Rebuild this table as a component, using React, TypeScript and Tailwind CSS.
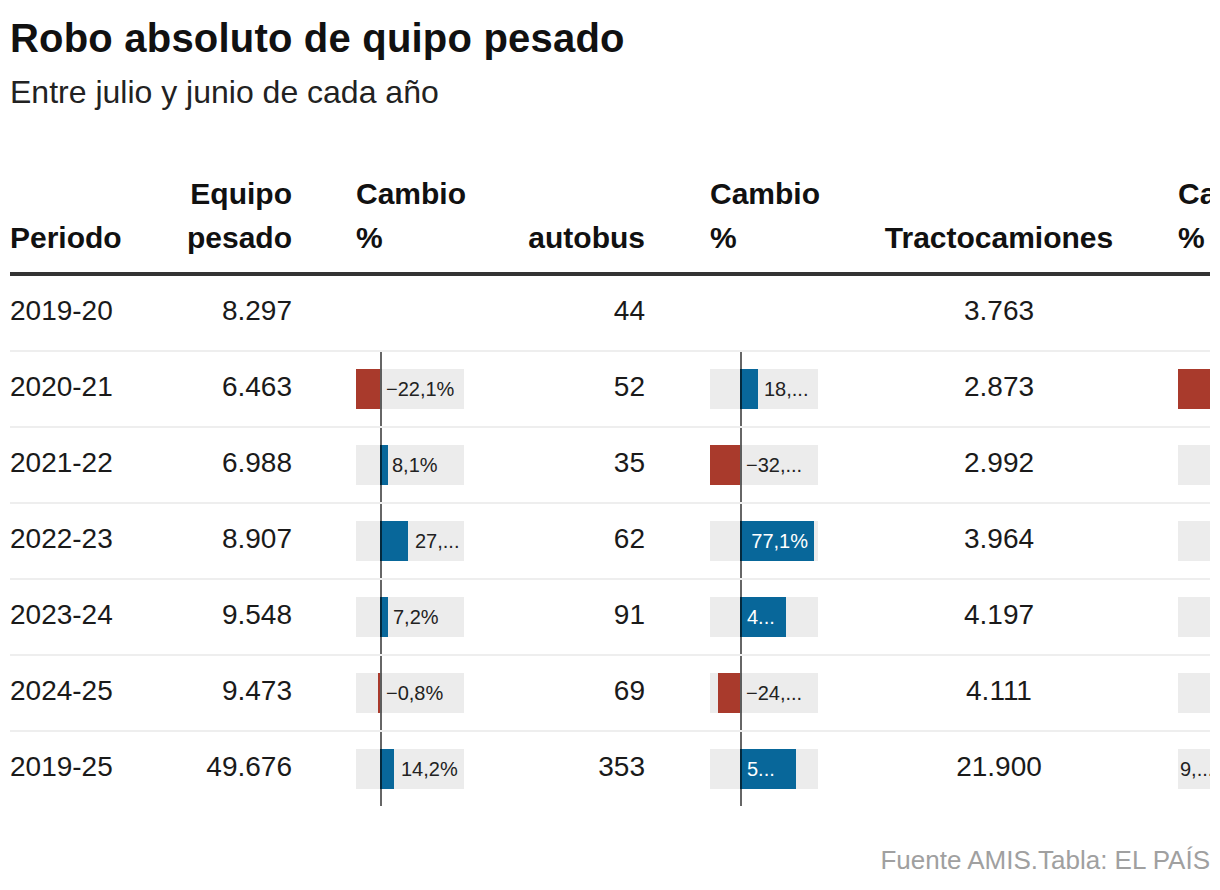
import React from 'react'

type Bar = {
  from: number
  w: number
  neg?: boolean
  label?: string
  lx?: number
  lr?: number
  white?: boolean
}

type Row = {
  periodo: string
  equipo: string
  c1: Bar | null
  bus: string
  c2: Bar | null
  tracto: string
  c3: Bar | null
}

const rows: Row[] = [
  { periodo: '2019-20', equipo: '8.297', c1: null, bus: '44', c2: null, tracto: '3.763', c3: null },
  {
    periodo: '2020-21', equipo: '6.463',
    c1: { from: 0, w: 24, neg: true, label: '−22,1%', lx: 30 },
    bus: '52',
    c2: { from: 30, w: 18, label: '18,...', lx: 54 },
    tracto: '2.873',
    c3: { from: 0, w: 100, neg: true },
  },
  {
    periodo: '2021-22', equipo: '6.988',
    c1: { from: 24, w: 8, label: '8,1%', lx: 36 },
    bus: '35',
    c2: { from: 0, w: 30, neg: true, label: '−32,...', lx: 36 },
    tracto: '2.992',
    c3: { from: 100, w: 4 },
  },
  {
    periodo: '2022-23', equipo: '8.907',
    c1: { from: 24, w: 28, label: '27,...', lx: 59 },
    bus: '62',
    c2: { from: 30, w: 74, label: '77,1%', lr: 10, white: true },
    tracto: '3.964',
    c3: { from: 100, w: 8 },
  },
  {
    periodo: '2023-24', equipo: '9.548',
    c1: { from: 24, w: 8, label: '7,2%', lx: 37 },
    bus: '91',
    c2: { from: 30, w: 46, label: '4...', lx: 37, white: true },
    tracto: '4.197',
    c3: { from: 100, w: 6 },
  },
  {
    periodo: '2024-25', equipo: '9.473',
    c1: { from: 22, w: 2, neg: true, label: '−0,8%', lx: 30 },
    bus: '69',
    c2: { from: 8, w: 22, neg: true, label: '−24,...', lx: 36 },
    tracto: '4.111',
    c3: { from: 98, w: 2, neg: true },
  },
  {
    periodo: '2019-25', equipo: '49.676',
    c1: { from: 24, w: 14, label: '14,2%', lx: 45 },
    bus: '353',
    c2: { from: 30, w: 56, label: '5...', lx: 37, white: true },
    tracto: '21.900',
    c3: { from: 100, w: 8, label: '9,...', lx: 2 },
  },
]

const cols = 'grid grid-cols-[160px_122px_182px_171px_183px_342px_230px]'

function ChangeCell({ bar, pad, zero }: { bar: Bar | null; pad: string; zero: number }) {
  if (!bar) return <div />
  return (
    <div className={`relative h-full flex items-center ${pad}`}>
      <div className="relative h-10 w-[108px] bg-[#ececec]">
        <div
          className={`absolute top-0 bottom-0 ${bar.neg ? 'bg-[#a93a2c]' : 'bg-[#08679a]'}`}
          style={{ left: bar.from, width: bar.w }}
        />
        {bar.label && (
          <span
            className={`absolute top-0 bottom-0 flex items-center whitespace-nowrap text-[20px] ${bar.white ? 'text-white' : 'text-[#222]'}`}
            style={bar.lr !== undefined ? { right: bar.lr } : { left: bar.lx }}
          >
            {bar.label}
          </span>
        )}
        <div className="absolute -top-[17px] -bottom-[17px] w-[2px] bg-black/60" style={{ left: zero }} />
      </div>
    </div>
  )
}

export default function App() {
  return (
    <div className="w-[1220px] h-[890px] overflow-hidden bg-white px-[10px] font-['Liberation_Sans',Arial,sans-serif] text-[#1a1a1a]">
      <h1 className="pt-[14px] text-[40px] leading-[48px] font-bold tracking-[0.2px] text-[#111]">Robo absoluto de quipo pesado</h1>
      <p className="mt-[10px] text-[32px] leading-[40px] text-[#222]">Entre julio y junio de cada año</p>

      <div className="mt-[60px] w-[1200px] overflow-hidden">
        <div className={`${cols} items-end pb-[12px] border-b-4 border-[#333] text-[30px] leading-[44px] font-bold text-[#111]`}>
          <div>Periodo</div>
          <div className="text-right">Equipo<br />pesado</div>
          <div className="pl-[64px] whitespace-nowrap">Cambio<br />%</div>
          <div className="text-right">autobus</div>
          <div className="pl-[65px] whitespace-nowrap">Cambio<br />%</div>
          <div className="text-center">Tractocamiones</div>
          <div className="pl-[8px] whitespace-nowrap">Cambio<br />%</div>
        </div>

        {rows.map((r, i) => (
          <div
            key={r.periodo}
            className={`${cols} items-center text-[28px] ${i < rows.length - 1 ? 'h-[76px] border-b-2 border-[#eee]' : 'h-[74px]'}`}
          >
            <div className="pb-1">{r.periodo}</div>
            <div className="pb-1 text-right">{r.equipo}</div>
            <ChangeCell bar={r.c1} pad="pl-[64px]" zero={24} />
            <div className="pb-1 text-right">{r.bus}</div>
            <ChangeCell bar={r.c2} pad="pl-[65px]" zero={30} />
            <div className="pb-1 text-center">{r.tracto}</div>
            <ChangeCell bar={r.c3} pad="pl-[8px]" zero={100} />
          </div>
        ))}
      </div>

      <p className="mt-[38px] text-right text-[26px] leading-[32px] text-[#a0a0a0]">Fuente AMIS.Tabla: EL PAÍS</p>
    </div>
  )
}
